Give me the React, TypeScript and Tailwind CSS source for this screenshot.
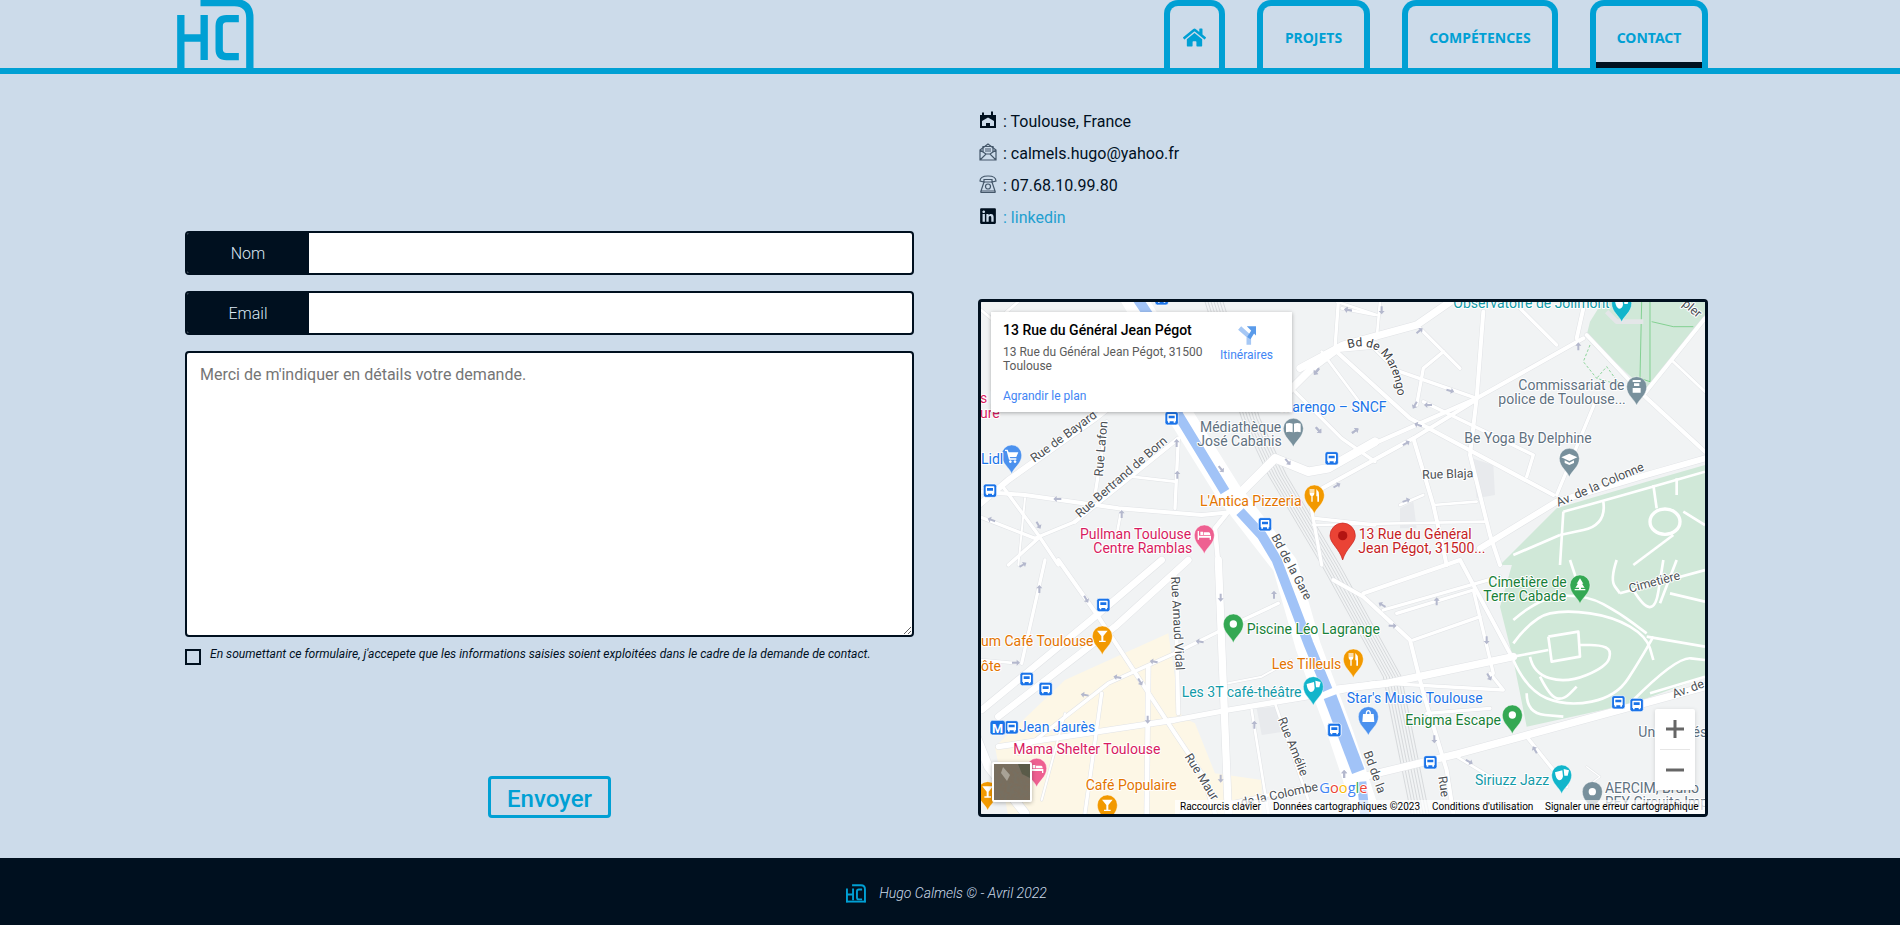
import React from 'react';
import { FaHome, FaLinkedin } from 'react-icons/fa';

const BLUE = '#00a0d4';

// roads are noted in crop units (3 units = 1px), one list per map quarter
type Road = [string, number];
const QUARTERS: { x: number; y: number; roads: Road[] }[] = [
  {
    x: 975,
    y: 295,
    roads: [
      ['0,640 100,555 360,370 450,300', 18],
      ['395,380 360,600', 10],
      ['300,680 610,430', 12],
      ['20,590 150,600 430,640 680,660 780,650', 12],
      ['610,430 600,640', 10],
      ['470,545 600,560', 8],
      ['0,660 180,730 300,680', 10],
      ['80,570 190,720 250,810', 10],
      ['150,610 130,810', 6],
      ['440,640 425,720', 8],
      ['760,650 720,700 730,810', 14],
      ['190,730 100,810', 10],
      ['780,610 900,490 1000,530 1060,520 1200,440', 26],
      ['930,300 1010,220 1090,160 1200,150', 22],
      ['1090,20 1080,160', 10],
      ['1100,40 1200,60', 8],
      ['1040,170 1160,330', 8],
      ['960,290 1100,430 1200,500', 10],
      ['1020,670 1200,690', 10],
      ['1000,590 1040,810', 10],
      ['0,30 60,80 130,20', 8],
    ],
  },
  {
    x: 1300,
    y: 295,
    roads: [
      ['0,220 130,150 350,90 480,0', 22],
      ['130,150 220,160 280,220 300,290', 6],
      ['300,230 530,310', 10],
      ['530,310 850,130', 12],
      ['550,50 530,310 510,480 570,720 600,810', 12],
      ['430,170 370,220 350,330', 10],
      ['360,100 480,220', 10],
      ['660,40 770,150', 10],
      ['190,460 530,310', 12],
      ['30,600 340,430 520,320', 12],
      ['110,170 330,370 760,600', 12],
      ['370,320 700,480 680,545', 10],
      ['340,430 400,630 440,810', 12],
      ['400,630 530,620', 8],
      ['300,630 370,600', 8],
      ['40,690 560,680', 8],
      ['890,310 770,600', 10],
      ['860,120 1030,300 1215,470', 12],
      ['1030,300 1215,70', 12],
      ['1120,200 1215,290', 8],
      ['850,40 830,130', 12],
      ['540,760 770,620 1040,540 1215,490', 18],
      ['110,20 230,60', 8],
      ['240,20 230,130', 8],
    ],
  },
  {
    x: 975,
    y: 560,
    roads: [
      ['20,450 360,170 560,0', 20],
      ['70,470 420,200 640,0', 20],
      ['250,0 370,170 600,520 680,640 720,760', 12],
      ['210,0 140,310', 10],
      ['20,300 130,310', 8],
      ['730,0 760,760', 22],
      ['600,50 610,460', 12],
      ['130,580 400,370 600,280 760,200 910,130', 10],
      ['70,560 600,480 760,450 1060,400 1200,370', 16],
      ['380,400 330,760', 10],
      ['520,320 515,760', 14],
      ['270,460 200,720', 6],
      ['900,430 1000,720', 8],
      ['830,450 880,760', 8],
      ['760,370 860,350 950,300', 6],
      ['0,520 40,620 150,760', 26],
      ['620,760 1000,680', 10],
    ],
  },
  {
    x: 1300,
    y: 560,
    roads: [
      ['100,60 190,110 330,240 370,400 440,630 460,760', 12],
      ['190,100 480,0', 12],
      ['250,150 600,50', 10],
      ['290,160 520,90', 10],
      ['520,90 580,340', 10],
      ['340,240 540,170', 10],
      ['480,0 630,280', 12],
      ['0,400 260,370 640,290', 22],
      ['260,370 610,390 570,340', 10],
      ['380,460 570,445', 10],
      ['190,650 480,580 1215,380', 22],
      ['680,530 800,680', 10],
      ['470,590 620,680', 8],
      ['860,620 900,650 860,680', 4],
    ],
  },
];

const PARK_PATHS = [
  '640,250 700,170 800,150 940,170 1040,230 1060,300',
  '690,290 700,340 800,370 920,320 935,270 900,255 840,255',
  '720,350 750,410 790,420 830,380',
  '640,300 680,390 800,440 950,410 1020,300 1060,230',
  '1040,230 1215,260',
  '960,100 1215,30',
  '640,180 720,110 860,105 960,160 1040,220',
  '680,400 680,460 790,470',
  '810,0 830,60',
  '1000,90 1060,190 1090,0',
  '1110,100 1215,125',
  '640,290 745,270',
  '1000,420 1130,290 1215,300',
  '1215,350 1050,400',
  '950,0 930,60 960,100',
  '1130,0 1080,130',
];

const PARK_PATHS_TOP = [
  '790,650 780,810',
  '790,650 900,620 1215,530',
  '910,620 920,690 780,720',
  '1060,570 1070,640',
  '1130,550 1130,600',
  '640,780 780,720',
  '1150,650 1215,690',
  '1000,810 1120,720',
];

// rounds a noted line: corners become curves through the segment middles
function smooth(points: string) {
  const pts = points.split(' ').map((p) => p.split(',').map(Number));
  let d = `M${pts[0][0]},${pts[0][1]}`;
  for (let i = 1; i < pts.length - 1; i++) {
    const mx = (pts[i][0] + pts[i + 1][0]) / 2;
    const my = (pts[i][1] + pts[i + 1][1]) / 2;
    d += ` Q${pts[i][0]},${pts[i][1]} ${mx},${my}`;
  }
  const last = pts[pts.length - 1];
  return `${d} L${last[0]},${last[1]}`;
}

type Arrow = [number, number, number];
const ARROWS: Arrow[][] = [
  [[605, 445, -90], [738, 522, 50], [607, 540, -90], [1025, 230, 130], [1030, 405, 45], [1140, 408, -30], [938, 500, 50], [248, 612, 180], [440, 658, -90], [190, 690, 60], [50, 675, 200], [1120, 45, 190]],
  [[145, 45, 190], [245, 45, 90], [358, 108, -40], [835, 155, -90], [450, 287, 15], [385, 330, 180], [345, 330, 120], [355, 390, 200], [55, 405, 50], [165, 408, -40], [318, 445, -30], [110, 572, -30], [318, 617, -20], [50, 228, 130]],
  [[143, 15, -30], [193, 88, -90], [333, 117, 60], [122, 308, 0], [675, 245, 190], [537, 305, 190], [428, 352, 190], [330, 405, 190], [495, 365, 60], [518, 478, 90], [737, 112, 90], [897, 105, -90], [838, 495, -90], [737, 655, 90], [1107, 643, -90]],
  [[247, 135, 210], [410, 125, -90], [277, 197, 0], [560, 240, 90], [567, 350, 60], [403, 537, 90], [507, 605, 30], [705, 570, -120], [133, 643, -90]],
];

const BUSES: [number, number][][] = [
  [[590, 370], [1070, 490], [45, 587], [870, 688], [560, 10]],
  [],
  [[385, 135], [155, 357], [212, 387], [110, 502], [1078, 510]],
  [[103, 510], [391, 607], [955, 427], [1010, 435]],
];

const ORANGE = '#e37400';
const PINK = '#d81b60';
const GREEN = '#188038';
const TEAL = '#129aa8';
const TRANSIT = '#1a73e8';
const SLATE = '#5f717f';
const RED = '#c5221f';

type Label = [string, number, number, string];
const LABELS: Label[][] = [
  [
    ['Médiathèque', 675, 410, SLATE],
    ['José Cabanis', 667, 452, SLATE],
    ["L'Antica Pizzeria", 675, 632, ORANGE],
    ['Pullman Toulouse', 315, 732, PINK],
    ['Centre Ramblas', 355, 773, PINK],
    ['Lidl', 18, 508, TRANSIT],
    ['s b', 15, 325, PINK],
    ['ure', 15, 368, PINK],
    ['Marengo – SNCF', 915, 352, TRANSIT],
  ],
  [
    ['Observatoire de Jolimont', 460, 40, TEAL],
    ['Commissariat de', 655, 285, SLATE],
    ['police de Toulouse...', 595, 327, SLATE],
    ['Be Yoga By Delphine', 493, 445, SLATE],
    ['13 Rue du Général', 176, 732, RED],
    ['Jean Pégot, 31500...', 175, 773, RED],
  ],
  [
    ['um Café Toulouse', 18, 258, ORANGE],
    ['ôte', 18, 332, ORANGE],
    ['Piscine Léo Lagrange', 815, 222, GREEN],
    ['Les Tilleuls', 890, 326, ORANGE],
    ['Les 3T café-théâtre', 620, 410, TEAL],
    ["Star's Music Toulouse", 1115, 428, TRANSIT],
    ['Jean Jaurès', 132, 515, TRANSIT],
    ['Mama Shelter Toulouse', 115, 582, PINK],
    ['Café Populaire', 332, 690, ORANGE],
  ],
  [
    ['Cimetière de', 565, 80, GREEN],
    ['Terre Cabade', 550, 122, GREEN],
    ['Enigma Escape', 316, 495, GREEN],
    ['Siriuzz Jazz', 525, 675, TEAL],
    ['AERCIM, Bruno', 915, 700, SLATE],
    ['REY Circuits Imp', 915, 742, SLATE],
    ['Universités', 1015, 530, SLATE],
  ],
];

type StreetName = [string, number, number, number];
const STREETS: StreetName[][] = [
  [
    ['Rue de Bayard', 178, 503, -36],
    ['Rue Lafon', 383, 545, -85],
    ['Rue Bertrand de Born', 315, 670, -41],
    ['Bd de la Gare', 888, 725, 62],
  ],
  [
    ['Rue Blaja', 367, 552, -2],
    ['Av. de la Colonne', 775, 635, -23],
    ['pler', 1145, 30, 40],
  ],
  [
    ['Rue Arnaud Vidal', 588, 50, 87],
    ['Rue Amélie', 908, 478, 68],
    ['Rue Maur', 628, 590, 58],
    ['Bd de la', 1165, 578, 70],
    ['de la Colombe', 800, 740, -12],
  ],
  [
    ['Cimetière', 990, 98, -15],
    ['Av. de', 1122, 415, -20],
    ['Rue', 415, 650, 82],
  ],
];

type Glyph = 'food' | 'glass' | 'bed' | 'book' | 'cart' | 'dot' | 'masks' | 'bag' | 'tree' | 'cap' | 'police';
const glyphs: Record<Glyph, React.ReactNode> = {
  food: <path d="M-14,-18 V-4 Q-14,2 -9,3 V20 H-5 V3 Q0,2 0,-4 V-18 H-3 V-6 H-5 V-18 H-9 V-6 H-11 V-18 Z M6,-18 Q14,-12 14,0 V20 H9 V4 H6 Z" fill="#fff" />,
  glass: <path d="M-16,-16 H16 L3,0 V14 H10 V18 H-10 V14 H-3 V0 Z" fill="#fff" />,
  bed: <path d="M-20,-12 H-16 V2 H20 V14 H16 V8 H-16 V14 H-20 Z M-12,-10 H-4 V0 H-12 Z M-2,-8 H14 Q18,-8 18,0 H-2 Z" fill="#fff" />,
  book: <path d="M-2,-14 Q-12,-18 -22,-14 V12 Q-12,8 -2,12 Z M2,-14 Q12,-18 22,-14 V12 Q12,8 2,12 Z" fill="#fff" />,
  cart: <path d="M-20,-16 H-12 L-9,-8 H20 L14,6 H-6 L-4,10 H14 V14 H-8 L-15,-12 H-20 Z M-4,16 a4,4 0 1 0 .1,0 Z M10,16 a4,4 0 1 0 .1,0 Z" fill="#fff" />,
  dot: <circle r="11" fill="#fff" />,
  masks: <path d="M-20,-8 L2,-14 L4,4 Q2,16 -8,16 Q-18,12 -20,-8 Z M6,-18 L22,-14 L18,2 L8,2 Z" fill="#fff" />,
  bag: <path d="M-16,-8 H-8 Q-8,-20 0,-20 Q8,-20 8,-8 H16 L18,16 H-18 Z M-4,-8 H4 Q4,-16 0,-16 Q-4,-16 -4,-8 Z" fill="#fff" />,
  tree: <path d="M0,-20 L10,-4 H6 L14,8 H3 V12 H16 V16 H-16 V12 H-3 V8 H-14 L-6,-4 H-10 Z" fill="#fff" />,
  cap: <path d="M0,-14 L24,-3 L0,8 L-24,-3 Z M-14,6 L0,13 L14,6 V14 L0,20 L-14,14 Z" fill="#fff" />,
  police: <path d="M-12,-20 H12 V-14 H-12 Z M-8,-10 H8 V-2 H-8 Z M-12,4 H12 V18 H-12 Z" fill="#fff" />,
};

type PinData = [number, number, string, Glyph];
const PINS: PinData[][] = [
  [[955, 400, '#78909c', 'book'], [1018, 600, '#f29900', 'food'], [688, 720, '#ee6091', 'bed'], [110, 480, '#4b91ee', 'cart']],
  [[965, 25, '#12b5cb', 'masks'], [1010, 275, '#78909c', 'police'], [808, 490, '#78909c', 'cap']],
  [[382, 228, '#f29900', 'glass'], [775, 192, '#34a853', 'dot'], [1135, 297, '#f29900', 'food'], [1015, 380, '#12b5cb', 'masks'], [185, 625, '#ee6091', 'bed'], [397, 735, '#f29900', 'glass'], [38, 695, '#f29900', 'glass']],
  [[840, 75, '#34a853', 'tree'], [637, 465, '#34a853', 'dot'], [205, 470, '#4b91ee', 'bag'], [785, 645, '#12b5cb', 'masks'], [877, 695, '#78909c', 'dot']],
];

function Pin({ x, y, color, glyph }: { x: number; y: number; color: string; glyph: Glyph }) {
  return (
    <g transform={`translate(${x} ${y})`}>
      <path d="M0,56 C-6,38 -30,26 -30,0 A30,30 0 1 1 30,0 C30,26 6,38 0,56 Z" fill={color} stroke="#fff" strokeOpacity="0.6" strokeWidth="2" />
      {glyphs[glyph]}
    </g>
  );
}

function Bus({ x, y }: { x: number; y: number }) {
  return (
    <g transform={`translate(${x} ${y})`}>
      <rect x="-20" y="-20" width="40" height="40" rx="7" fill="#1a73e8" stroke="#fff" strokeWidth="2" />
      <path d="M-11,-13 H11 Q13,-13 13,-11 V9 H11 V13 H6 V9 H-6 V13 H-11 V9 H-13 V-11 Q-13,-13 -11,-13 Z M-9,-8 V0 H9 V-8 Z" fill="#fff" fillRule="evenodd" />
    </g>
  );
}

function MapDrawing() {
  const q = (i: number) => `translate(${QUARTERS[i].x} ${QUARTERS[i].y}) scale(0.33333)`;
  return (
    <svg viewBox="981 302 724 512" className="block h-[512px] w-[724px]" style={{ fontFamily: 'Roboto, sans-serif' }}>
      <defs>
        <path id="marengo" d="M145,160 Q265,125 292,295" />
      </defs>
      <rect x="981" y="302" width="724" height="512" fill="#f1f3f4" />

      {/* parks, beige quarter and buildings */}
      <g transform={q(1)} fill="#d0e8d8">
        <path d="M870,80 L920,0 H1215 V60 L1040,290 L860,120 Z" />
        <path d="M600,810 L770,640 L1040,560 L1215,510 V810 Z" />
        <path d="M515,490 L580,510 L585,600 L530,610 Z M300,640 L340,620 L350,700 L300,700 Z" fill="#e8eaed" />
      </g>
      <g transform={q(3)} fill="#d0e8d8">
        <path d="M600,140 L640,0 H1215 V350 L1000,430 L680,500 L640,300 Z" />
      </g>
      <g transform={q(2)}>
        <path d="M60,560 L270,360 L580,220 L600,350 L620,470 L660,490 L720,640 L860,660 V770 H100 Z" fill="#fdf7e6" />
        <path d="M845,445 L900,440 L925,515 L860,525 Z" fill="#e8eaed" />
      </g>

      {/* rail tracks */}
      <g transform={q(2)} fill="none" stroke="#c9cbcf" strokeWidth="2">
        {[0, 9, 18, 27, 36, 45, 54].map((dx) => (
          <polyline key={dx} transform={`translate(${dx} 0)`} points="690,-775 800,-425 880,-255 1040,15 1225,350 1310,770" />
        ))}
      </g>

      {/* streets, grey edge first */}
      {QUARTERS.map((quarter, i) => (
        <g key={i} transform={q(i)} fill="none" stroke="#e1e3e6" strokeLinecap="round" strokeLinejoin="round">
          {quarter.roads.map(([points, width], j) => (
            <polyline key={j} points={points} strokeWidth={width + 3} />
          ))}
        </g>
      ))}
      {QUARTERS.map((quarter, i) => (
        <g key={i} transform={q(i)} fill="none" stroke="#fff" strokeLinecap="round" strokeLinejoin="round">
          {quarter.roads.map(([points, width], j) => (
            <polyline key={j} points={points} strokeWidth={width} />
          ))}
        </g>
      ))}
      <g transform={q(3)} fill="none" stroke="#fff" strokeWidth="8" strokeLinejoin="round">
        {PARK_PATHS.map((points) => <path key={points} d={smooth(points)} />)}
        <polyline points="745,230 835,215 840,290 755,305 745,230" />
      </g>
      <g transform={q(1)} fill="none" stroke="#fff" strokeWidth="8" strokeLinejoin="round">
        {PARK_PATHS_TOP.map((points) => <path key={points} d={smooth(points)} />)}
        <ellipse cx="1095" cy="680" rx="45" ry="38" strokeWidth="10" />
        <polyline points="1025,20 1020,250 1050,260 1050,20" stroke="#5cc46e" strokeWidth="2" />
        <polyline points="1055,80 1120,95 1180,95" stroke="#5cc46e" strokeWidth="2" />
        <polyline points="870,150 850,200 890,250 960,270 920,215 890,250" stroke="#5cc46e" strokeWidth="2" strokeDasharray="8 6" />
        <polyline points="920,50 950,80 1030,80" stroke="#e4e6e8" strokeWidth="14" />
      </g>

      {/* canal with its two banks */}
      <g transform={q(2)} fill="none" strokeLinejoin="round">
        <polyline points="470,-795 530,-695 610,-445 760,-205 860,-75 930,15 1000,260 1100,530 1180,770" stroke="#fff" strokeWidth="76" />
        <polyline points="480,-795 520,-735 610,-435 750,-205" stroke="#a1c3f7" strokeWidth="30" />
        <polyline points="795,-145 860,-75 905,0 1000,250 1058,390" stroke="#a1c3f7" strokeWidth="30" />
        <polyline points="1065,410 1150,635" stroke="#a1c3f7" strokeWidth="40" />
        <polyline points="1160,665 1170,770" stroke="#a1c3f7" strokeWidth="28" />
      </g>

      {/* one way arrows */}
      {ARROWS.map((list, i) => (
        <g key={i} transform={q(i)} fill="#b4b8cd">
          {list.map(([x, y, angle], j) => (
            <path key={j} transform={`translate(${x} ${y}) rotate(${angle})`} d="M-11,-3 H3 V-9 L13,0 L3,9 V3 H-11 Z" />
          ))}
        </g>
      ))}

      {/* street names */}
      {STREETS.map((list, i) => (
        <g key={i} transform={q(i)} fontSize="37" fill="#4b4f54" stroke="#fff" strokeWidth="6" paintOrder="stroke" strokeLinejoin="round">
          {list.map(([text, x, y, angle]) => (
            <text key={text} transform={`translate(${x} ${y}) rotate(${angle})`}>{text}</text>
          ))}
        </g>
      ))}
      <g transform={q(1)} fontSize="36" fill="#3c4043" stroke="#fff" strokeWidth="6" paintOrder="stroke" strokeLinejoin="round">
        <text><textPath href="#marengo">Bd de Marengo</textPath></text>
      </g>

      {/* pins and stops */}
      {BUSES.map((list, i) => (
        <g key={i} transform={q(i)}>
          {list.map(([x, y]) => <Bus key={`${x}-${y}`} x={x} y={y} />)}
        </g>
      ))}
      {PINS.map((list, i) => (
        <g key={i} transform={q(i)}>
          {list.map(([x, y, color, glyph]) => <Pin key={`${x}-${y}`} x={x} y={y} color={color} glyph={glyph} />)}
        </g>
      ))}
      <g transform={q(2)}>
        <rect x="45" y="481" width="46" height="44" rx="8" fill="#1a73e8" stroke="#fff" strokeWidth="2" />
        <text x="68" y="518" fontSize="38" fontWeight="700" fill="#fff" textAnchor="middle">M</text>
      </g>
      <g transform={q(1)}>
        <path d="M128,795 C118,760 90,745 90,722 A38,38 0 1 1 166,722 C166,745 138,760 128,795 Z" fill="#ea4335" stroke="#c5221f" strokeWidth="2" />
        <circle cx="128" cy="722" r="14" fill="#b31412" />
      </g>

      {/* place names */}
      {LABELS.map((list, i) => (
        <g key={i} transform={q(i)} fontSize="42" stroke="#fff" strokeWidth="6" paintOrder="stroke" strokeLinejoin="round">
          {list.map(([text, x, y, color]) => (
            <text key={text} x={x} y={y} fill={color}>{text}</text>
          ))}
        </g>
      ))}

      {/* logo */}
      <g transform={q(3)} fontSize="44" fontWeight="500" stroke="#fff" strokeWidth="6" paintOrder="stroke" style={{ fontFamily: '"Open Sans", sans-serif' }}>
        <text x="58" y="698">
          <tspan fill="#4285f4">G</tspan>
          <tspan fill="#ea4335">o</tspan>
          <tspan fill="#fbbc05">o</tspan>
          <tspan fill="#4285f4">g</tspan>
          <tspan fill="#34a853">l</tspan>
          <tspan fill="#ea4335">e</tspan>
        </text>
      </g>
    </svg>
  );
}

function MapEmbed() {
  return (
    <div className="relative h-[518px] w-[730px] overflow-hidden rounded-[4px] border-[3px] border-[#00101f] font-['Roboto',sans-serif]">
      <MapDrawing />

      <div className="absolute left-[10px] top-[10px] flex h-[100px] w-[301px] justify-between bg-white pl-[12px] pr-[19px] pt-[9px] shadow-[0_1px_4px_rgba(0,0,0,0.3)]">
        <div className="w-[208px]">
          <div className="text-[14px] font-medium leading-[18px] text-black">13 Rue du Général Jean Pégot</div>
          <div className="mt-[6px] text-[12px] leading-[14px] text-[#5b5b5b]">13 Rue du Général Jean Pégot, 31500 Toulouse</div>
          <div className="mt-[16px] text-[12px] leading-[14px] text-[#4285f4]">Agrandir le plan</div>
        </div>
        <div className="flex flex-col items-center pt-[5px]">
          <svg viewBox="785 92 55 56" className="h-[19px] w-[18px]">
            <path d="M790,97 L818,122 V148" fill="none" stroke="#a6c8f5" strokeWidth="14" />
            <path d="M818,128 L832,106" fill="none" stroke="#5a9bea" strokeWidth="12" />
            <path d="M812,92 H840 V120 Z" fill="#5a9bea" />
          </svg>
          <span className="mt-[3px] text-[12px] leading-[14px] text-[#4285f4]">Itinéraires</span>
        </div>
      </div>

      <div className="absolute bottom-[12px] left-[11px] h-[40px] w-[40px] rounded-[2px] border-2 border-white shadow-[0_1px_4px_rgba(0,0,0,0.3)]">
        <svg viewBox="0 0 36 36" className="block h-full w-full">
          <filter id="sat">
            <feTurbulence type="fractalNoise" baseFrequency="0.3" numOctaves="3" seed="4" />
            <feColorMatrix values="0 0 0 0 0.18  0 0 0 0 0.16  0 0 0 0 0.12  1.6 1.6 0 0 -1.1" />
          </filter>
          <rect width="36" height="36" fill="#7a6d5c" />
          <rect width="36" height="36" filter="url(#sat)" />
          <path d="M9,3 L16,11 L13,17 L7,9 Z" fill="#b8b4aa" opacity="0.75" />
          <path d="M24,0 H36 V14 L28,10 Z" fill="#4d5240" opacity="0.7" />
        </svg>
      </div>

      <div className="absolute left-[674px] top-[407px] flex h-[81px] w-[40px] flex-col items-center rounded-[2px] bg-white shadow-[0_1px_4px_rgba(0,0,0,0.15)]">
        <svg viewBox="0 0 18 18" className="mt-[11px] h-[18px] w-[18px]">
          <path d="M7.5,0 H10.5 V7.5 H18 V10.5 H10.5 V18 H7.5 V10.5 H0 V7.5 H7.5 Z" fill="#666" />
        </svg>
        <div className="mt-[11px] h-px w-[30px] bg-[#e6e6e6]" />
        <svg viewBox="0 0 18 18" className="mt-[11px] h-[18px] w-[18px]">
          <path d="M0,7.5 H18 V10.5 H0 Z" fill="#666" />
        </svg>
      </div>

      <div className="absolute bottom-0 right-0 flex h-[14px] w-[530px] items-center gap-[10px] bg-white/70 pl-[5px] text-[10px] leading-[14px] text-black">
        <span className="w-[83px]">Raccourcis clavier</span>
        <span className="w-[149px]">Données cartographiques ©2023</span>
        <span className="w-[103px]">Conditions d'utilisation</span>
        <span>Signaler une erreur cartographique</span>
      </div>
    </div>
  );
}

function Logo({ className, footer }: { className: string; footer?: boolean }) {
  return (
    <svg viewBox="80 0 230 204" className={className} fill="none" stroke={BLUE} strokeWidth="22">
      <path d="M91,45 V204 M91,114 H161 M161,45 V180" />
      <path d="M265,56 H228 Q206,56 206,78 V148 Q206,170 228,170 H265" />
      <path d="M150,8 H252 Q298,8 298,54 V204" />
      {footer && <path d="M80,195 H308" />}
    </svg>
  );
}

const TABS = [
  { label: 'home', width: 'w-[61px]' },
  { label: 'PROJETS', width: 'w-[113px]' },
  { label: 'COMPÉTENCES', width: 'w-[156px]' },
  { label: 'CONTACT', width: 'w-[118px]' },
];

function Header() {
  return (
    <header className="flex h-[74px] shrink-0 items-end justify-between border-b-[6px] border-[#00a0d4] pl-[177px] pr-[192px]">
      <Logo className="h-[68px] w-[77px]" />
      <nav className="flex gap-[32px]">
        {TABS.map((tab) => (
          <a
            key={tab.label}
            className={`relative flex h-[68px] items-center justify-center rounded-t-[14px] border-[6px] border-b-0 border-[#00a0d4] font-['Noto_Sans',sans-serif] text-[14px] font-bold text-[#00a0d4] ${tab.width}`}
          >
            {tab.label === 'home' ? <FaHome size={23} /> : tab.label}
            {tab.label === 'CONTACT' && <span className="absolute inset-x-0 bottom-0 h-[6px] bg-[#00101f]" />}
          </a>
        ))}
      </nav>
    </header>
  );
}

function InputGroup({ label, type }: { label: string; type: string }) {
  return (
    <div className="flex h-[44px] overflow-hidden rounded-[4px] border-2 border-[#00101f] bg-white">
      <label className="flex w-[122px] items-center justify-center bg-[#00101f] pt-[2px] text-[16px] font-light text-[#dbe7f3]">{label}</label>
      <input type={type} className="min-w-0 flex-1 px-3 outline-none" />
    </div>
  );
}

function ContactForm() {
  return (
    <form className="flex w-[729px] flex-col pt-[157px]">
      <InputGroup label="Nom" type="text" />
      <div className="mt-[16px]">
        <InputGroup label="Email" type="email" />
      </div>
      <textarea
        placeholder="Merci de m'indiquer en détails votre demande."
        className="mt-[16px] block h-[286px] rounded-[4px] border-2 border-[#00101f] bg-white px-[13px] pb-[8px] pt-[10px] text-[16px] leading-[24px] outline-none placeholder:text-[#757575]"
      />
      <div className="mt-[12px] flex items-start gap-[9px]">
        <input type="checkbox" className="h-[16px] w-[16px] appearance-none rounded-none border-2 border-[#00101f]" />
        <p className="-mt-[2px] text-[12.1px] italic leading-[14px] text-[#00101f]">
          En soumettant ce formulaire, j'accepete que les informations saisies soient exploitées dans le cadre de la demande de contact.
        </p>
      </div>
      <button type="button" className="mx-auto mt-[111px] h-[42px] w-[123px] rounded-[4px] border-[3px] border-[#00a0d4] pt-[2px] text-[24px] font-medium text-[#00a0d4]">
        Envoyer
      </button>
    </form>
  );
}

function ContactInfo() {
  const rows = [
    {
      text: 'Toulouse, France',
      icon: (
        <svg viewBox="0 0 18 18" className="mb-[4px] h-[18px] w-[18px]">
          <path d="M1,4 H3 V1.5 H5 V4 H12 V0.5 H14 V4 H17 V17 H1 Z" fill="#00101f" />
          <path d="M9,6.5 L15,10 V15 H11 V12 H7 V15 H3 V10 Z" fill="#ccdbea" />
        </svg>
      ),
    },
    {
      text: 'calmels.hugo@yahoo.fr',
      icon: (
        <svg viewBox="0 0 18 18" className="mb-[4px] h-[18px] w-[18px]" fill="none" stroke="#44576a" strokeWidth="1.2">
          <path d="M1,7 L9,1 L17,7 V17 H1 Z M1,17 L7,11 H11 L17,17 M1,7 L7,11 M17,7 L11,11" />
          <path d="M4,9 V3.5 H14 V9 M6,6 H12 M6,8 H12" />
        </svg>
      ),
    },
    {
      text: '07.68.10.99.80',
      icon: (
        <svg viewBox="0 0 18 18" className="mb-[4px] h-[18px] w-[18px]" fill="none" stroke="#44576a" strokeWidth="1.2">
          <path d="M1,6 Q1,1 9,1 Q17,1 17,6 L13,7 V4.5 H5 V7 Z" />
          <path d="M5,7 L2,16 H16 L13,7 Z" />
          <circle cx="9" cy="11.5" r="2.5" />
          <path d="M2,16 V17.5 H16 V16" />
        </svg>
      ),
    },
  ];
  return (
    <div className="pl-px pt-[32px] text-[16px] text-[#00101f]">
      {rows.map((row) => (
        <div key={row.text} className="flex h-[32px] items-center gap-[6px]">
          {row.icon}
          <span>: {row.text}</span>
        </div>
      ))}
      <div className="flex h-[32px] items-center gap-[6px]">
        <FaLinkedin size={18} className="mb-[4px] text-[#00101f]" />
        <a className="text-[#1f9fd0]">: linkedin</a>
      </div>
    </div>
  );
}

function Footer() {
  return (
    <footer className="flex h-[67px] shrink-0 items-center justify-center gap-[13px] bg-[#00101f] pr-[7px] pt-[4px]">
      <Logo className="h-[19px] w-[20px]" footer />
      <span className="text-[14px] font-light italic text-[#ccdbea]">Hugo Calmels © - Avril 2022</span>
    </footer>
  );
}

export default function App() {
  return (
    <div className="flex h-[925px] flex-col bg-[#ccdbea] font-['Roboto',sans-serif]">
      <Header />
      <main className="flex flex-1 gap-[64px] pl-[185px] pr-[192px]">
        <ContactForm />
        <div className="w-[730px]">
          <ContactInfo />
          <div className="mt-[65px]">
            <MapEmbed />
          </div>
        </div>
      </main>
      <Footer />
    </div>
  );
}
